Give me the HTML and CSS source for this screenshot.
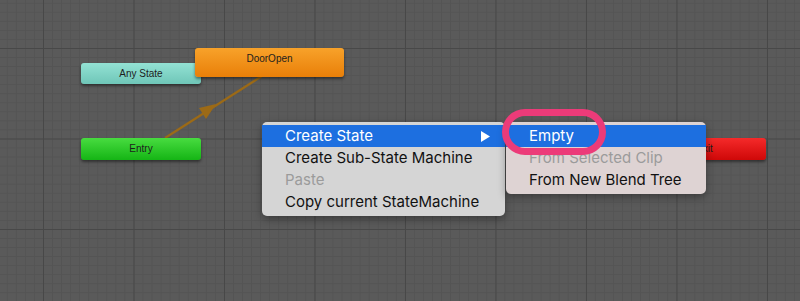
FILE: index.html
```html
<!DOCTYPE html>
<html lang="en">
<head>
    <meta charset="UTF-8">
    <title>Animator</title>
    <link rel="stylesheet" href="styles.css">
</head>
<body>
    <div class="graph">
        <!-- transition Entry -> DoorOpen -->
        <svg class="links" width="800" height="301" viewBox="0 0 800 301">
            <line x1="165" y1="138" x2="262" y2="76" stroke="#9c6a16" stroke-width="2.2"/>
            <polygon points="216,104 199,108 206,119" fill="#9c6a16"/>
        </svg>

        <div class="node node-any">Any State</div>
        <div class="node node-door">DoorOpen</div>
        <div class="node node-entry">Entry</div>
        <div class="node node-exit">Exit</div>

        <div class="menu menu-main">
            <div class="menu-item active">
                <span>Create State</span>
                <svg class="submark" width="9" height="11" viewBox="0 0 9 11"><polygon points="0,0 9,5.5 0,11" fill="#fff"/></svg>
            </div>
            <div class="menu-item">Create Sub-State Machine</div>
            <div class="menu-item disabled">Paste</div>
            <div class="menu-item">Copy current StateMachine</div>
        </div>

        <div class="menu menu-sub">
            <div class="menu-item active">Empty</div>
            <div class="menu-item disabled">From Selected Clip</div>
            <div class="menu-item">From New Blend Tree</div>
        </div>

        <div class="mark"></div>
    </div>
</body>
</html>
```

FILE: styles.css
```css
body {
    margin: 0;
    font-family: Inter, "Liberation Sans", Arial, sans-serif;
}
.graph {
    position: relative;
    width: 800px;
    height: 301px;
    overflow: hidden;
    background-color: #5a5a5a;
    background-image:
        linear-gradient(to right, #484848 1px, transparent 1px),
        linear-gradient(to bottom, #484848 1px, transparent 1px),
        linear-gradient(to right, #545454 1px, transparent 1px),
        linear-gradient(to bottom, #545454 1px, transparent 1px);
    background-size: 90.5px 90.5px, 90.5px 90.5px, 9.05px 9.05px, 9.05px 9.05px;
    background-position: 43px 48px, 43px 48px, 43px 48px, 43px 48px;
}
.links {
    position: absolute;
    left: 0;
    top: 0;
}
.node {
    position: absolute;
    box-sizing: border-box;
    border-radius: 3px;
    font-family: "Liberation Sans", Arial, sans-serif;
    font-size: 10px;
    color: #1d1d1d;
    text-align: center;
    box-shadow: 0 2px 3px rgba(0,0,0,0.45);
}
.node-any {
    left: 81px;
    top: 63px;
    width: 120px;
    height: 21px;
    line-height: 21px;
    background: linear-gradient(#93e2d4, #6fc6b8);
}
.node-door {
    left: 195px;
    top: 48px;
    width: 149px;
    height: 29px;
    padding-top: 5px;
    line-height: 12px;
    background: linear-gradient(#f8a22a, #e97f08);
}
.node-entry {
    left: 81px;
    top: 138px;
    width: 120px;
    height: 22px;
    line-height: 22px;
    background: linear-gradient(#48dc40, #15b515);
}
.node-exit {
    left: 643px;
    top: 138px;
    width: 123px;
    height: 22px;
    line-height: 22px;
    background: linear-gradient(#f52a2a, #cf0808);
}
.menu {
    position: absolute;
    box-sizing: border-box;
    padding: 3px 0;
    border-radius: 5px;
    box-shadow: 0 3px 8px rgba(0,0,0,0.35);
}
.menu-main {
    left: 262px;
    top: 122px;
    width: 243px;
    background-color: #d5d5d5;
}
.menu-sub {
    left: 506px;
    top: 122px;
    width: 200px;
    background-color: #ded3d3;
}
.menu-item {
    display: flex;
    align-items: center;
    justify-content: space-between;
    height: 22px;
    line-height: 22px;
    padding: 0 15px 0 23px;
    font-size: 15px;
    color: #111;
}
.menu-item.active {
    background-color: #1d6fe0;
    color: #fff;
}
.menu-item.disabled {
    color: #9b9b9b;
}
.submark {
    display: block;
}
.mark {
    position: absolute;
    left: 502px;
    top: 109px;
    width: 104px;
    height: 46px;
    box-sizing: border-box;
    border: 7px solid #ec3b79;
    border-radius: 23px;
}
```
